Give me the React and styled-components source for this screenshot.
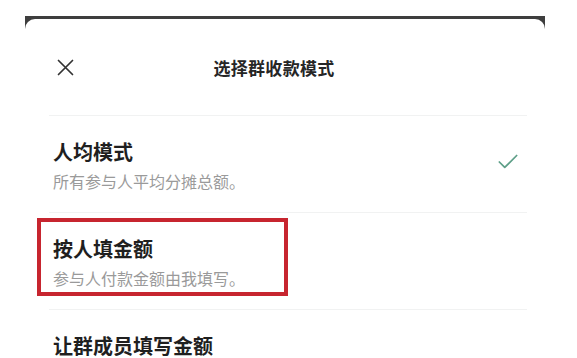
import React from "react";
import styled, { createGlobalStyle } from "styled-components";
import { Check } from "lucide-react";

const GlobalStyle = createGlobalStyle`
  html, body {
    margin: 0;
    padding: 0;
    background: #ffffff;
  }
  body {
    font-family: "Noto Sans CJK SC", "Noto Sans", sans-serif;
    overflow: hidden;
  }
`;

const modes = [
  { title: "人均模式", desc: "所有参与人平均分摊总额。", selected: true },
  { title: "按人填金额", desc: "参与人付款金额由我填写。", marked: true },
  { title: "让群成员填写金额", desc: "群成员自行填写付款金额。" },
];

const App = () => {
  return (
    <>
      <GlobalStyle />
      <Frame>
        <Sheet>
          <Header>
            <CloseButton aria-label="关闭">
              <svg width="17" height="17" viewBox="0 0 17 17">
                <path
                  d="M1.5 1.5 15.5 15.5 M15.5 1.5 1.5 15.5"
                  stroke="#333333"
                  strokeWidth="1.7"
                  strokeLinecap="round"
                />
              </svg>
            </CloseButton>
            <Title>选择群收款模式</Title>
            <span />
          </Header>
          {modes.map((m) => (
            <Row key={m.title}>
              <RowText>
                <RowTitle>{m.title}</RowTitle>
                <RowDesc>{m.desc}</RowDesc>
              </RowText>
              {m.selected && (
                <CheckMark>
                  <Check size={26} strokeWidth={1.6} color="#5e9f88" />
                </CheckMark>
              )}
              {m.marked && <Highlight />}
            </Row>
          ))}
        </Sheet>
      </Frame>
    </>
  );
};

const Frame = styled.div`
  margin: 16px 32px 0 25px;
  padding-top: 3px;
  background: linear-gradient(#3e3e3e, #5a5a5a);
`;

const Sheet = styled.div`
  background: #ffffff;
  border-radius: 10px 10px 0 0;
  height: 340px;
  overflow: hidden;
`;

const Header = styled.div`
  display: grid;
  grid-template-columns: 1fr auto 1fr;
  align-items: center;
  height: 96px;
  padding: 0 32px 0 8px;
  margin: 0 18px 0 24px;
  border-bottom: 1px solid #f1f2f2;
`;

const CloseButton = styled.div`
  display: flex;
  align-items: center;
  width: 17px;
  height: 17px;
`;

const Title = styled.div`
  font-size: 17px;
  font-weight: 700;
  color: #262626;
  letter-spacing: 0.3px;
  margin-left: -4px;
`;

const Row = styled.div`
  position: relative;
  display: flex;
  align-items: center;
  justify-content: space-between;
  margin: 0 18px 0 24px;
  padding: 22px 6px 20px 4px;
  border-bottom: 1px solid #f1f2f2;
`;

const RowText = styled.div`
  display: flex;
  flex-direction: column;
  gap: 4px;
`;

const RowTitle = styled.div`
  font-size: 20px;
  line-height: 28px;
  font-weight: 700;
  color: #1f1f1f;
`;

const RowDesc = styled.div`
  font-size: 16px;
  line-height: 22px;
  color: #9a9a9a;
`;

const CheckMark = styled.div`
  display: flex;
  margin-bottom: 6px;
`;

const Highlight = styled.div`
  position: absolute;
  left: -12px;
  top: 5px;
  width: 251px;
  height: 78px;
  box-sizing: border-box;
  border: 4px solid #c7252f;
  pointer-events: none;
`;

export default App;
